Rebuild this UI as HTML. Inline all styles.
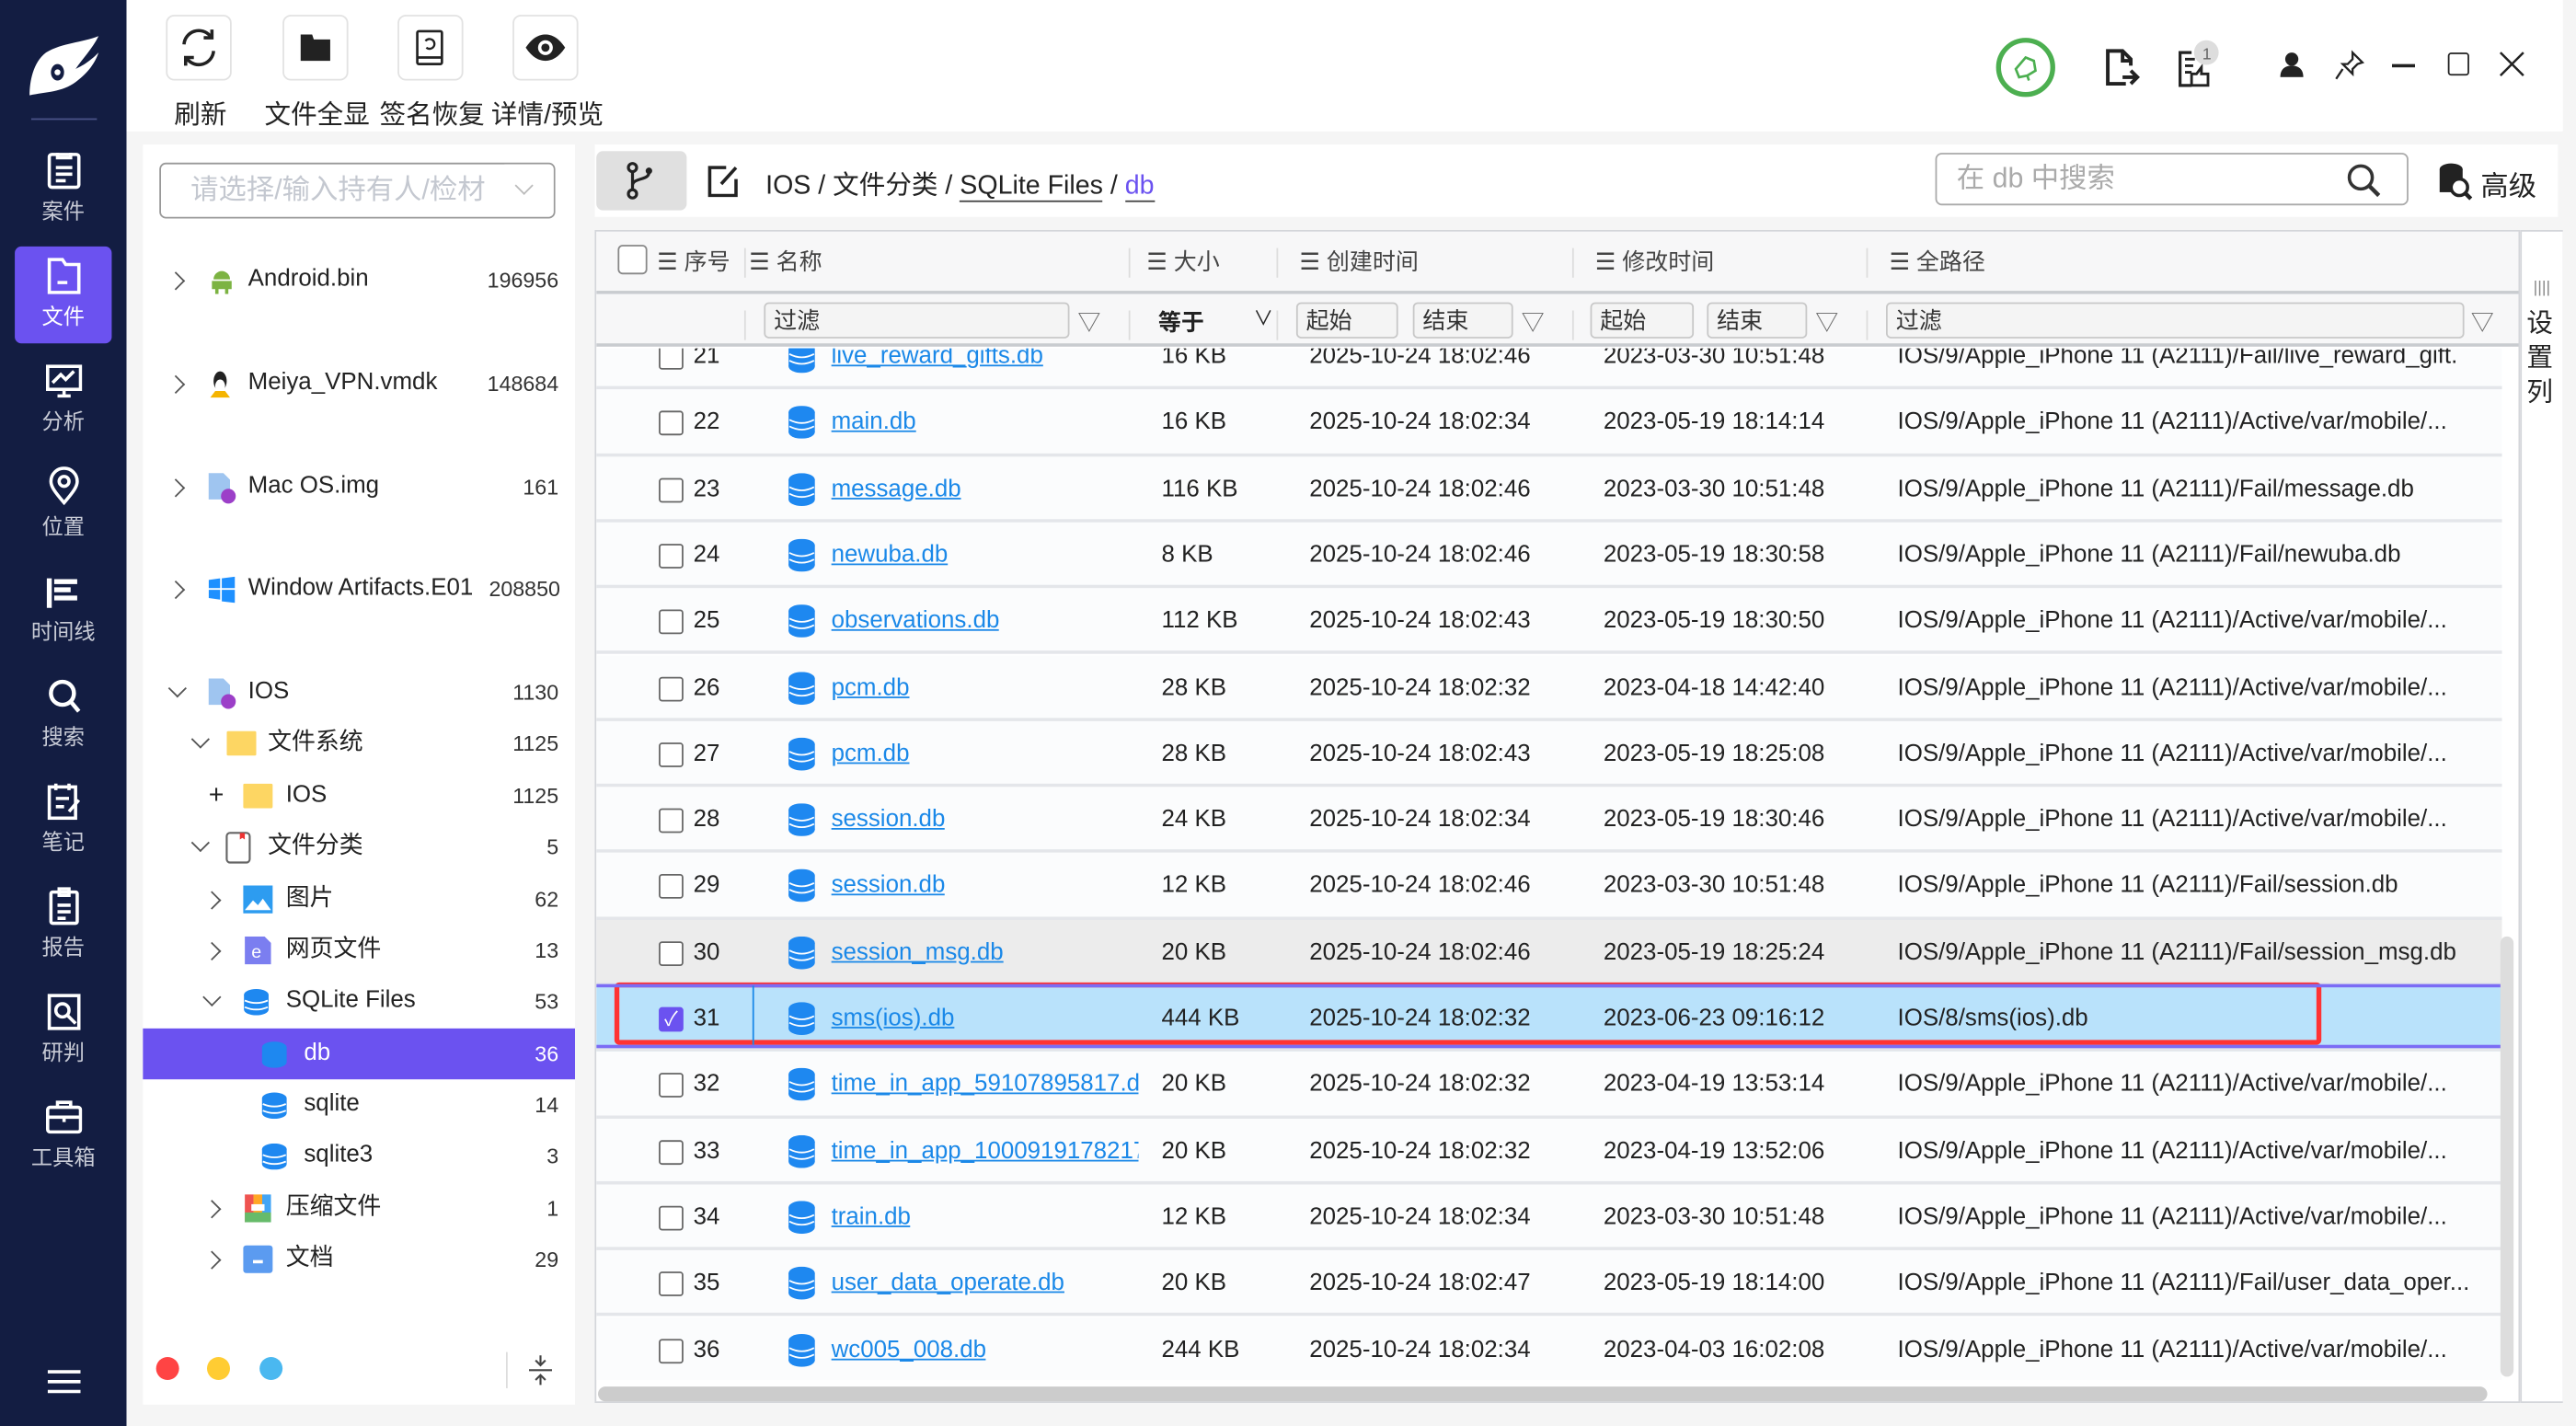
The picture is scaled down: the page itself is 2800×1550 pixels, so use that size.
<!DOCTYPE html>
<html><head><meta charset="utf-8"><style>
*{box-sizing:border-box;margin:0;padding:0}
html,body{width:2800px;height:1550px;overflow:hidden;background:#f5f5f5}
#w{position:absolute;left:0;top:0;width:1568px;height:868px;transform:scale(1.785714);transform-origin:0 0;font-family:"Liberation Sans","Noto Sans CJK SC",sans-serif;color:#222;background:#f5f5f5}
.a{position:absolute}
.side{left:0;top:0;width:77px;height:868px;background:#131d42}
.nav{position:absolute;left:9px;width:59px;height:59px;color:#c8cbd6;font-size:13px;text-align:center}
.nav svg{display:block;margin:6px auto 2px}
.tb{width:40px;height:40px;border:1px solid #e2e2e2;border-radius:5px;background:#fff;top:9px}
.tl{top:56px;font-size:16px;white-space:nowrap}
.tree{left:87px;top:88px;width:263px;height:767px;background:#fff}
.tr{position:absolute;left:0;width:263px;height:31px;font-size:14.5px;line-height:31px}
.tr .n{position:absolute;right:10px;font-size:13px;color:#333}
.chev{position:absolute;width:8px;height:8px;border-right:1.3px solid #555;border-bottom:1.3px solid #555}
.cr{transform:rotate(-45deg)}.cd{transform:rotate(45deg)}
.tbl{left:362px;top:140px;width:1172px;height:714px;background:#fff;border:1px solid #d4d6da;overflow:hidden}
.hd{position:absolute;left:0;top:0;width:1172px;height:38px;background:#f7f7f8;border-bottom:2px solid #c9ccd0;font-size:14px;color:#444}
.fl{position:absolute;left:0;top:38px;width:1172px;height:32px;background:#f7f7f8;border-bottom:2px solid #c9ccd0;font-size:14px}
.fi{position:absolute;top:5px;height:22px;border:1px solid #c8c8c8;border-radius:3px;background:#f4f4f4;padding-left:5px;line-height:20px;color:#333;font-size:14px}
.row{position:absolute;left:0;width:1160px;height:40.27px;border-bottom:2px solid #e4e6ea;background:#fbfcfd;font-size:14.5px;line-height:40px;white-space:nowrap}
.row span{position:absolute}
.cb{position:absolute;left:38px;top:13px;width:15px;height:15px;border:1.5px solid #666;border-radius:2px;background:#fff}
.nm{color:#1a88e8;text-decoration:underline;overflow:hidden;max-width:187px}
.sep{position:absolute;top:10px;width:1px;height:18px;background:#ddd}
</style></head><body><div id="w">
<div class="a side">
<svg class="a" style="left:16px;top:20px" width="46" height="40" viewBox="0 0 46 40"><path d="M44 2C34 6 22 6 12 12 4 18 2 30 2 38 12 36 22 36 30 30 38 24 42 18 44 12 38 18 34 20 30 22 34 16 40 10 44 2Z" fill="#fff"/><ellipse cx="19" cy="24" rx="4" ry="5" fill="#131d42"/><circle cx="19" cy="24" r="1.8" fill="#fff"/></svg>
<div class="a" style="left:19px;top:72px;width:40px;height:1px;background:#4a5388"></div>
<div class="nav" style="top:86px"><svg width="22" height="24" viewBox="0 0 22 24"><rect x="2" y="2" width="18" height="20" rx="1.5" fill="none" stroke="#fff" stroke-width="2"/><path d="M7 1v3h8V1M6 10h10M6 14h10M6 18h6" stroke="#fff" stroke-width="2" fill="none"/></svg>案件</div>
<div class="nav" style="top:150px;background:#6b52f0;border-radius:4px;color:#fff"><svg width="22" height="24" viewBox="0 0 22 24"><path d="M2 2h8l2 3h8v17H2Z" fill="none" stroke="#fff" stroke-width="2"/><path d="M7 16h6" stroke="#fff" stroke-width="2"/></svg>文件</div>
<div class="nav" style="top:214px"><svg width="22" height="24" viewBox="0 0 22 24"><rect x="1" y="3" width="20" height="14" fill="none" stroke="#fff" stroke-width="2"/><path d="M4 13l5-5 3 3 5-5M7 21h8M11 17v4" stroke="#fff" stroke-width="2" fill="none"/></svg>分析</div>
<div class="nav" style="top:278px"><svg width="22" height="24" viewBox="0 0 22 24"><path d="M11 22C5 15 3 12 3 9a8 8 0 0116 0c0 3-2 6-8 13Z" fill="none" stroke="#fff" stroke-width="2"/><circle cx="11" cy="9" r="3" fill="none" stroke="#fff" stroke-width="2"/></svg>位置</div>
<div class="nav" style="top:342px"><svg width="22" height="24" viewBox="0 0 22 24"><path d="M2 4v18M5 6h14M5 11h10M5 16h14" stroke="#fff" stroke-width="3" fill="none"/></svg>时间线</div>
<div class="nav" style="top:406px"><svg width="22" height="24" viewBox="0 0 22 24"><circle cx="10" cy="10" r="7" fill="none" stroke="#fff" stroke-width="2.5"/><path d="M15 15l5 6" stroke="#fff" stroke-width="2.5"/></svg>搜索</div>
<div class="nav" style="top:470px"><svg width="22" height="24" viewBox="0 0 22 24"><rect x="2" y="3" width="16" height="19" fill="none" stroke="#fff" stroke-width="2"/><path d="M6 1v4M14 1v4M6 10h8M6 15h5M14 18l6-7" stroke="#fff" stroke-width="2" fill="none"/></svg>笔记</div>
<div class="nav" style="top:534px"><svg width="22" height="24" viewBox="0 0 22 24"><rect x="3" y="3" width="16" height="19" rx="1" fill="none" stroke="#fff" stroke-width="2"/><path d="M8 1h6v4H8ZM7 11h8M7 15h8M7 19h5" stroke="#fff" stroke-width="2" fill="none"/></svg>报告</div>
<div class="nav" style="top:598px"><svg width="22" height="24" viewBox="0 0 22 24"><rect x="2" y="2" width="18" height="20" fill="none" stroke="#fff" stroke-width="2"/><circle cx="10" cy="11" r="4" fill="none" stroke="#fff" stroke-width="2"/><path d="M13 14l5 5" stroke="#fff" stroke-width="2"/></svg>研判</div>
<div class="nav" style="top:662px"><svg width="22" height="24" viewBox="0 0 22 24"><rect x="1" y="6" width="20" height="15" rx="1.5" fill="none" stroke="#fff" stroke-width="2"/><path d="M7 6V3h8v3M1 12h20M11 11v4" stroke="#fff" stroke-width="2" fill="none"/></svg>工具箱</div>
<svg class="a" style="left:29px;top:833px" width="20" height="16"><path d="M0 2h20M0 8h20M0 14h20" stroke="#fff" stroke-width="2"/></svg>
</div>
<div class="a" style="left:77px;top:0;width:1491px;height:80px;background:#fff"></div>
<div class="a tb" style="left:101px"><svg width="38" height="38" viewBox="0 0 38 38"><path d="M10 17a9 9 0 0116-5M28 21a9 9 0 01-16 5" fill="none" stroke="#222" stroke-width="2"/><path d="M27 8v5h-5M11 30v-5h5" fill="none" stroke="#222" stroke-width="2"/></svg></div>
<div class="a tb" style="left:172px"><svg width="38" height="38" viewBox="0 0 38 38"><path d="M10 11h7l1 3h10v13H10Z" fill="#222"/></svg></div>
<div class="a tb" style="left:242px"><svg width="38" height="38" viewBox="0 0 38 38"><rect x="11" y="9" width="15" height="20" rx="1" fill="none" stroke="#222" stroke-width="1.5"/><path d="M11 25h15" stroke="#222" stroke-width="1.5"/><path d="M16 15a3 3 0 11.5 4" fill="none" stroke="#222" stroke-width="1.3"/></svg></div>
<div class="a tb" style="left:312px"><svg width="38" height="38" viewBox="0 0 38 38"><path d="M7 19c4-6 8-8 12-8s8 2 12 8c-4 6-8 8-12 8s-8-2-12-8Z" fill="#222"/><circle cx="19" cy="19" r="4.5" fill="#fff"/><circle cx="19" cy="19" r="2.5" fill="#222"/></svg></div>
<div class="a tl" style="left:106px">刷新</div>
<div class="a tl" style="left:161px">文件全显</div>
<div class="a tl" style="left:231px">签名恢复</div>
<div class="a tl" style="left:299px">详情/预览</div>
<svg class="a" style="left:1214px;top:22px" width="38" height="38" viewBox="0 0 38 38"><circle cx="19" cy="19" r="16.5" fill="none" stroke="#4caf50" stroke-width="3"/><path d="M13 20l6-7 5 2 1 6-5 3-5 1ZM20 24l1 3" fill="none" stroke="#4caf50" stroke-width="1.5"/></svg>
<svg class="a" style="left:1280px;top:28px" width="26" height="26" viewBox="0 0 26 26"><path d="M14 23H3V3h9l5 5v4" fill="none" stroke="#222" stroke-width="2.2"/><path d="M12 3v6h5M12 19h8M17 15l4 4-4 4" fill="none" stroke="#222" stroke-width="2.2"/></svg>
<svg class="a" style="left:1324px;top:24px" width="32" height="30" viewBox="0 0 32 30"><path d="M10 28H3V8h7" fill="none" stroke="#222" stroke-width="1.8"/><path d="M6 12h6M6 16h5M6 20h4M10 28v-7h3l3-4v4h4v7Z" fill="none" stroke="#222" stroke-width="1.6"/><circle cx="19" cy="8" r="7.5" fill="#ddd"/><text x="16.5" y="12" font-size="10" fill="#666" font-family="Liberation Sans">1</text></svg>
<svg class="a" style="left:1387px;top:31px" width="16" height="16" viewBox="0 0 16 16"><circle cx="8" cy="5" r="4" fill="#222"/><path d="M1 16c0-5 3-7 7-7s7 2 7 7Z" fill="#222"/></svg>
<svg class="a" style="left:1420px;top:30px" width="20" height="20" viewBox="0 0 20 20"><path d="M12 2l6 6-3 1-3 3 0 3-6-6 3 0 3-3ZM6 12l-4 6" fill="none" stroke="#222" stroke-width="1.3"/></svg>
<div class="a" style="left:1456px;top:39px;width:14px;height:1.5px;background:#222"></div>
<div class="a" style="left:1490px;top:32px;width:13px;height:14px;border:1.4px solid #222;border-radius:2px"></div>
<svg class="a" style="left:1521px;top:31px" width="16" height="16"><path d="M1 1l14 14M15 1L1 15" stroke="#222" stroke-width="1.4"/></svg>
<div class="a tree">
<div class="a" style="left:10px;top:11px;width:241px;height:34px;border:1.5px solid #999;border-radius:4px;font-size:17px;color:#c4c8d0;line-height:31px;padding-left:18px;white-space:nowrap;overflow:hidden">请选择/输入持有人/检材<span style="position:absolute;right:0;top:0;background:#fff;width:30px;height:30px"></span><span class="chev cd" style="right:14px;top:9px;border-color:#bbb"></span></div>
<div class="tr" style="top:67px"><i class="chev cr" style="left:16px;top:12px"></i><svg class="a" style="left:40px;top:8px" width="16" height="16"><path d="M3 7a5 5 0 0110 0ZM2 8h12v5H2ZM4 13h2v3H4ZM10 13h2v3h-2Z" fill="#7cb342"/></svg><span class="a" style="left:64px">Android.bin</span><span class="n">196956</span></div>
<div class="tr" style="top:130px"><i class="chev cr" style="left:16px;top:12px"></i><svg class="a" style="left:38px;top:6px" width="18" height="20"><ellipse cx="9" cy="8" rx="4" ry="6" fill="#222"/><ellipse cx="9" cy="11" rx="3" ry="4" fill="#fff"/><path d="M3 18l3-4 6 0 3 4Z" fill="#f5b400"/></svg><span class="a" style="left:64px">Meiya_VPN.vmdk</span><span class="n">148684</span></div>
<div class="tr" style="top:193px"><i class="chev cr" style="left:16px;top:12px"></i><svg class="a" style="left:38px;top:6px" width="20" height="20"><path d="M2 1h9l4 4v12H2Z" fill="#9fc5f0"/><circle cx="14" cy="15" r="4.5" fill="#9c3fc8"/></svg><span class="a" style="left:64px">Mac OS.img</span><span class="n">161</span></div>
<div class="tr" style="top:255px"><i class="chev cr" style="left:16px;top:12px"></i><svg class="a" style="left:40px;top:8px" width="16" height="16"><path d="M0 2l7-1v6H0ZM8 1l8-1v7H8ZM0 8h7v6l-7-1ZM8 8h8v8l-8-1Z" fill="#1e90ff"/></svg><span class="a" style="left:64px">Window Artifacts.E01</span><span class="n" style="right:9px">208850</span></div>
<div class="tr" style="top:318px"><i class="chev cd" style="left:17px;top:9px"></i><svg class="a" style="left:38px;top:6px" width="20" height="20"><path d="M2 1h9l4 4v12H2Z" fill="#9fc5f0"/><circle cx="14" cy="15" r="4.5" fill="#9c3fc8"/></svg><span class="a" style="left:64px">IOS</span><span class="n">1130</span></div>
<div class="tr" style="top:349px"><i class="chev cd" style="left:31px;top:9px"></i><svg class="a" style="left:51px;top:8px" width="18" height="15"><rect x="0" y="0" width="18" height="15" rx="1" fill="#fdd663"/></svg><span class="a" style="left:76px">文件系统</span><span class="n">1125</span></div>
<div class="tr" style="top:381px"><span class="a" style="left:40px;font-size:16px">+</span><svg class="a" style="left:61px;top:8px" width="18" height="15"><rect x="0" y="0" width="18" height="15" rx="1" fill="#fdd663"/></svg><span class="a" style="left:87px">IOS</span><span class="n">1125</span></div>
<div class="tr" style="top:412px"><i class="chev cd" style="left:31px;top:9px"></i><svg class="a" style="left:50px;top:6px" width="16" height="20"><rect x="1" y="1" width="14" height="18" rx="2" fill="none" stroke="#666" stroke-width="1.2"/><path d="M9 1h3v4l-1.5-1-1.5 1Z" fill="#e33"/></svg><span class="a" style="left:76px">文件分类</span><span class="n">5</span></div>
<div class="tr" style="top:444px"><i class="chev cr" style="left:38px;top:12px"></i><svg class="a" style="left:61px;top:7px" width="18" height="17"><rect width="18" height="17" fill="#2d9cf0"/><path d="M1 15l5-6 3 3 3-4 5 7Z" fill="#fff"/></svg><span class="a" style="left:87px">图片</span><span class="n">62</span></div>
<div class="tr" style="top:475px"><i class="chev cr" style="left:38px;top:12px"></i><svg class="a" style="left:62px;top:7px" width="16" height="17"><path d="M0 0h12l4 4v13H0Z" fill="#7b7ef0"/><text x="4" y="13" font-size="11" fill="#fff" font-family="Liberation Sans">e</text></svg><span class="a" style="left:87px">网页文件</span><span class="n">13</span></div>
<div class="tr" style="top:506px"><i class="chev cd" style="left:38px;top:9px"></i><svg class="a" style="left:61px;top:8px" width="16" height="16"><ellipse cx="8" cy="3.5" rx="7.5" ry="3.5" fill="#1e88f0"/><rect x="0.5" y="3.5" width="15" height="9" fill="#1e88f0"/><ellipse cx="8" cy="12.5" rx="7.5" ry="3.5" fill="#1e88f0"/><path d="M1 7q7 3 14 0M1 11q7 3 14 0" stroke="#fff" fill="none"/></svg><span class="a" style="left:87px">SQLite Files</span><span class="n">53</span></div>
<div class="tr" style="top:538px;background:#6b52f0;color:#fff"><svg class="a" style="left:72px;top:8px" width="16" height="16"><ellipse cx="8" cy="3.5" rx="7.5" ry="3.5" fill="#1e88f0"/><rect x="0.5" y="3.5" width="15" height="9" fill="#1e88f0"/><ellipse cx="8" cy="12.5" rx="7.5" ry="3.5" fill="#1e88f0"/></svg><span class="a" style="left:98px">db</span><span class="n" style="color:#fff">36</span></div>
<div class="tr" style="top:569px"><svg class="a" style="left:72px;top:8px" width="16" height="16"><ellipse cx="8" cy="3.5" rx="7.5" ry="3.5" fill="#1e88f0"/><rect x="0.5" y="3.5" width="15" height="9" fill="#1e88f0"/><ellipse cx="8" cy="12.5" rx="7.5" ry="3.5" fill="#1e88f0"/><path d="M1 7q7 3 14 0M1 11q7 3 14 0" stroke="#fff" fill="none"/></svg><span class="a" style="left:98px">sqlite</span><span class="n">14</span></div>
<div class="tr" style="top:600px"><svg class="a" style="left:72px;top:8px" width="16" height="16"><ellipse cx="8" cy="3.5" rx="7.5" ry="3.5" fill="#1e88f0"/><rect x="0.5" y="3.5" width="15" height="9" fill="#1e88f0"/><ellipse cx="8" cy="12.5" rx="7.5" ry="3.5" fill="#1e88f0"/><path d="M1 7q7 3 14 0M1 11q7 3 14 0" stroke="#fff" fill="none"/></svg><span class="a" style="left:98px">sqlite3</span><span class="n">3</span></div>
<div class="tr" style="top:632px"><i class="chev cr" style="left:38px;top:12px"></i><svg class="a" style="left:62px;top:7px" width="16" height="17"><rect width="5.3" height="17" fill="#ef5350"/><rect x="5.3" width="5.3" height="17" fill="#ffa726"/><rect x="10.6" width="5.4" height="17" fill="#42a5f5"/><rect y="11" width="16" height="6" fill="#66bb6a"/><rect x="4" y="6" width="8" height="4" fill="#fff"/></svg><span class="a" style="left:87px">压缩文件</span><span class="n">1</span></div>
<div class="tr" style="top:663px"><i class="chev cr" style="left:38px;top:12px"></i><svg class="a" style="left:61px;top:7px" width="18" height="17"><rect width="18" height="17" rx="2" fill="#5b9bf0"/><rect x="6" y="9" width="6" height="2" fill="#fff"/></svg><span class="a" style="left:87px">文档</span><span class="n">29</span></div>
<div class="a" style="left:8px;top:738px;width:14px;height:14px;border-radius:50%;background:#f44"></div>
<div class="a" style="left:39px;top:738px;width:14px;height:14px;border-radius:50%;background:#fc3"></div>
<div class="a" style="left:71px;top:738px;width:14px;height:14px;border-radius:50%;background:#4ab8f0"></div>
<div class="a" style="left:221px;top:735px;width:1px;height:22px;background:#ddd"></div>
<svg class="a" style="left:235px;top:736px" width="14" height="20"><path d="M0 10h14M7 1v6M4 4l3 3 3-3M7 19v-6M4 16l3-3 3 3" stroke="#444" stroke-width="1.2" fill="none"/></svg>
</div>
<div class="a" style="left:362px;top:88px;width:1195px;height:44px;background:#fff"></div>
<div class="a" style="left:363px;top:92px;width:55px;height:36px;background:#e0e0e0;border-radius:4px"></div>
<svg class="a" style="left:380px;top:98px" width="20" height="24"><circle cx="5" cy="4" r="2.5" fill="none" stroke="#222" stroke-width="1.8"/><circle cx="5" cy="20" r="2.5" fill="none" stroke="#222" stroke-width="1.8"/><path d="M5 6.5v11M5 15c0-5 10-3 10-8" fill="none" stroke="#222" stroke-width="1.8"/><circle cx="15" cy="6" r="2" fill="#222"/></svg>
<svg class="a" style="left:430px;top:100px" width="22" height="20"><path d="M12 2H2v17h16V9" fill="none" stroke="#222" stroke-width="2"/><path d="M9 12l9-10" stroke="#222" stroke-width="2"/></svg>
<div class="a" style="left:466px;top:99px;font-size:16px;white-space:nowrap">IOS / 文件分类 / <span style="border-bottom:1.5px solid #444">SQLite Files</span> / <span style="color:#6b52f0;border-bottom:1.5px solid #444">db</span></div>
<div class="a" style="left:1178px;top:93px;width:288px;height:32px;border:1.5px solid #aaa;border-radius:4px;font-size:17px;color:#aaa;line-height:29px;padding-left:12px">在 db 中搜索</div>
<svg class="a" style="left:1428px;top:99px" width="22" height="22"><circle cx="9" cy="9" r="7" fill="none" stroke="#333" stroke-width="2"/><path d="M14 14l6 6" stroke="#333" stroke-width="2.5"/></svg>
<svg class="a" style="left:1484px;top:99px" width="22" height="24"><ellipse cx="8" cy="4" rx="7" ry="3.5" fill="#222"/><rect x="1" y="4" width="14" height="14" fill="#222"/><circle cx="13" cy="15" r="5" fill="#fff" stroke="#222" stroke-width="2"/><path d="M16 18l4 4" stroke="#222" stroke-width="2.5"/></svg>
<div class="a" style="left:1510px;top:99px;font-size:17px">高级</div>
<div class="a tbl">
<div class="hd">
<div class="a" style="left:13px;top:8px;width:18px;height:18px;border:1.2px solid #888;border-radius:3px;background:#fff"></div>
<div class="a" style="left:37px;top:8px">☰ 序号</div><div class="sep" style="left:90px"></div>
<div class="a" style="left:93px;top:8px">☰ 名称</div><div class="sep" style="left:324px"></div>
<div class="a" style="left:335px;top:8px">☰ 大小</div><div class="sep" style="left:414px"></div>
<div class="a" style="left:428px;top:8px">☰ 创建时间</div><div class="sep" style="left:594px"></div>
<div class="a" style="left:608px;top:8px">☰ 修改时间</div><div class="sep" style="left:773px"></div>
<div class="a" style="left:787px;top:8px">☰ 全路径</div>
</div>
<div class="fl">
<div class="sep" style="left:90px"></div><div class="fi" style="left:102px;width:186px">过滤</div><div class="a" style="left:293px;top:7px;color:#666">▽</div>
<div class="sep" style="left:324px"></div><div class="a" style="left:342px;top:7px;font-weight:bold">等于</div><div class="a" style="left:400px;top:6px;font-size:12px">∨</div>
<div class="sep" style="left:414px"></div><div class="fi" style="left:426px;width:62px">起始</div><div class="fi" style="left:497px;width:61px">结束</div><div class="a" style="left:563px;top:7px;color:#666">▽</div>
<div class="sep" style="left:594px"></div><div class="fi" style="left:605px;width:63px">起始</div><div class="fi" style="left:676px;width:61px">结束</div><div class="a" style="left:742px;top:7px;color:#666">▽</div>
<div class="sep" style="left:773px"></div><div class="fi" style="left:785px;width:352px">过滤</div><div class="a" style="left:1141px;top:7px;color:#666">▽</div>
</div>
</div>
<div class="a" id="rows" style="left:363px;top:212px;width:1160px;height:628px;overflow:hidden"></div>
<div class="a" style="left:1522px;top:570px;width:8px;height:268px;background:#ddd;border-radius:4px"></div>
<div class="a" style="left:364px;top:844px;width:1150px;height:9px;background:#ccc;border-radius:5px"></div>
<div class="a" style="left:1534px;top:140px;width:27px;height:714px;background:#fff;border:1px solid #d4d6da"></div>
<div class="a" style="left:1542px;top:170px;font-size:10px;color:#888">||||</div>
<div class="a" style="left:1538px;top:187px;width:18px;font-size:16px;line-height:21px">设置列</div>
<div class="a" style="left:1560px;top:0;width:8px;height:868px;background:#f5f5f5"></div>
</div>
<script>
var D=[["21","live_reward_gifts.db","16 KB","18:02:46","2023-03-30 10:51:48","IOS/9/Apple_iPhone 11 (A2111)/Fail/live_reward_gift."],
["22","main.db","16 KB","18:02:34","2023-05-19 18:14:14","A"],
["23","message.db","116 KB","18:02:46","2023-03-30 10:51:48","IOS/9/Apple_iPhone 11 (A2111)/Fail/message.db"],
["24","newuba.db","8 KB","18:02:46","2023-05-19 18:30:58","IOS/9/Apple_iPhone 11 (A2111)/Fail/newuba.db"],
["25","observations.db","112 KB","18:02:43","2023-05-19 18:30:50","A"],
["26","pcm.db","28 KB","18:02:32","2023-04-18 14:42:40","A"],
["27","pcm.db","28 KB","18:02:43","2023-05-19 18:25:08","A"],
["28","session.db","24 KB","18:02:34","2023-05-19 18:30:46","A"],
["29","session.db","12 KB","18:02:46","2023-03-30 10:51:48","IOS/9/Apple_iPhone 11 (A2111)/Fail/session.db"],
["30","session_msg.db","20 KB","18:02:46","2023-05-19 18:25:24","IOS/9/Apple_iPhone 11 (A2111)/Fail/session_msg.db"],
["31","sms(ios).db","444 KB","18:02:32","2023-06-23 09:16:12","IOS/8/sms(ios).db"],
["32","time_in_app_59107895817.db","20 KB","18:02:32","2023-04-19 13:53:14","A"],
["33","time_in_app_10009191782171.db","20 KB","18:02:32","2023-04-19 13:52:06","A"],
["34","train.db","12 KB","18:02:34","2023-03-30 10:51:48","A"],
["35","user_data_operate.db","20 KB","18:02:47","2023-05-19 18:14:00","IOS/9/Apple_iPhone 11 (A2111)/Fail/user_data_oper..."],
["36","wc005_008.db","244 KB","18:02:34","2023-04-03 16:02:08","A"]];
var db='<svg width="18" height="20" viewBox="0 0 18 20" style="position:absolute;left:116px;top:10px"><ellipse cx="9" cy="4" rx="8" ry="4" fill="#1e88f0"/><rect x="1" y="4" width="16" height="12" fill="#1e88f0"/><ellipse cx="9" cy="16" rx="8" ry="4" fill="#1e88f0"/><path d="M1.5 8.5q7.5 4 15 0M1.5 12.5q7.5 4 15 0" stroke="#fff" fill="none"/></svg>';
var h='';D.forEach(function(r,i){var t=-15+i*40.3;var bg=r[0]=="30"?"#ececec":r[0]=="31"?"#b9e2fb":"#fbfcfd";
var p=r[5]=="A"?"IOS/9/Apple_iPhone 11 (A2111)/Active/var/mobile/...":r[5];
var cb=r[0]=="31"?'<div class="cb" style="background:#6b52f0;border-color:#6b52f0;color:#fff;font-size:12px;line-height:12px;text-align:center">✓</div>':'<div class="cb"></div>';
h+='<div class="row" style="top:'+t+'px;background:'+bg+'">'+cb+'<span style="left:59px">'+r[0]+'</span>'+db+'<span class="nm" style="left:143px">'+r[1]+'</span><span style="left:344px">'+r[2]+'</span><span style="left:434px">2025-10-24 '+r[3]+'</span><span style="left:613px">'+r[4]+'</span><span style="left:792px">'+p+'</span></div>';});
document.getElementById('rows').innerHTML=h+'<div style="position:absolute;left:11px;top:386px;width:1039px;height:38px;border:3px solid #f33;border-radius:3px"></div><div style="position:absolute;left:0;top:387px;width:1160px;height:2px;background:#7b6cf5"></div><div style="position:absolute;left:0;top:424px;width:1160px;height:2px;background:#7b6cf5"></div><div style="position:absolute;left:95px;top:388px;width:1px;height:36px;background:#1a88e8"></div>';
</script>
</body></html>
